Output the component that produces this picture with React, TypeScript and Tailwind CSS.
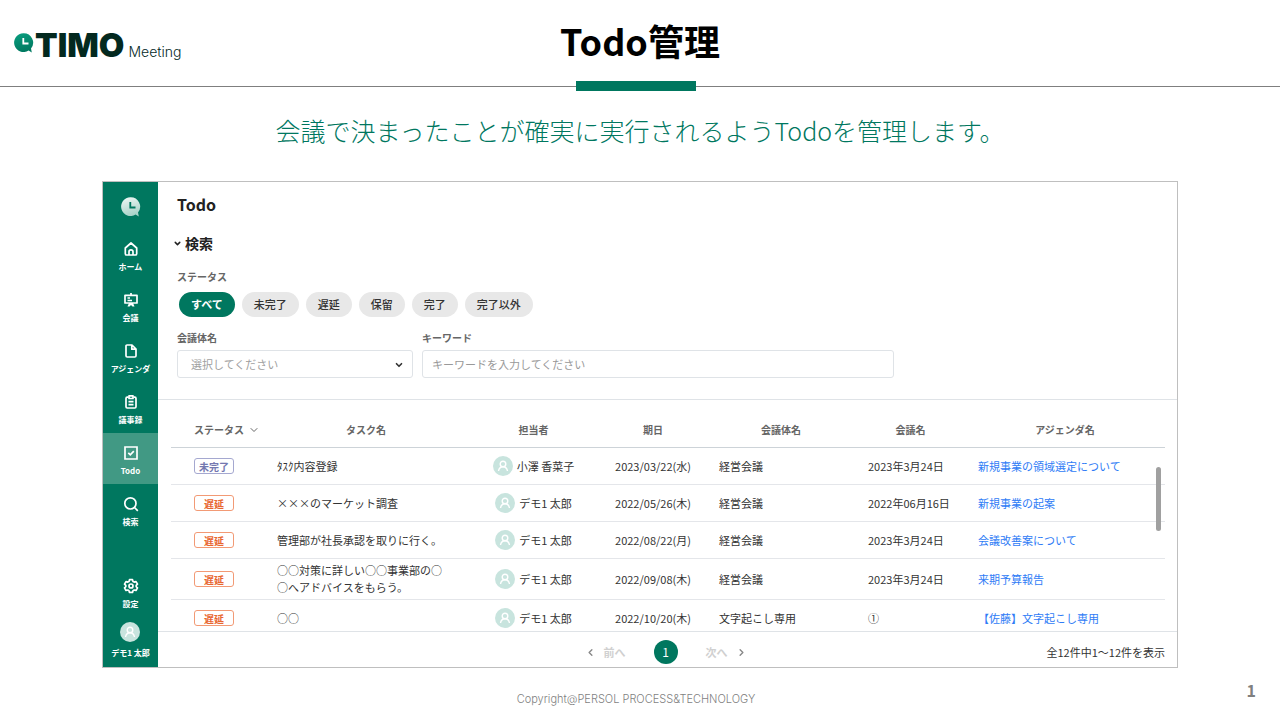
import React, { useState } from 'react';
import { ChevronDown, ChevronLeft, ChevronRight } from 'lucide-react';

interface Task {
  id: number;
  status: '未完了' | '遅延';
  name: string;
  assignee: string;
  dueDate: string;
  group: string;
  meeting: string;
  agenda: string;
}

const tasks: Task[] = [
  { id: 1, status: '未完了', name: 'ﾀｽｸ内容登録', assignee: '小澤 香菜子', dueDate: '2023/03/22(水)', group: '経営会議', meeting: '2023年3月24日', agenda: '新規事業の領域選定について' },
  { id: 2, status: '遅延', name: '×××のマーケット調査', assignee: 'デモ1 太郎', dueDate: '2022/05/26(木)', group: '経営会議', meeting: '2022年06月16日', agenda: '新規事業の起案' },
  { id: 3, status: '遅延', name: '管理部が社長承認を取りに行く。', assignee: 'デモ1 太郎', dueDate: '2022/08/22(月)', group: '経営会議', meeting: '2023年3月24日', agenda: '会議改善案について' },
  { id: 4, status: '遅延', name: '○○対策に詳しい○○事業部の○○へアドバイスをもらう。', assignee: 'デモ1 太郎', dueDate: '2022/09/08(木)', group: '経営会議', meeting: '2023年3月24日', agenda: '来期予算報告' },
  { id: 5, status: '遅延', name: '○○', assignee: 'デモ1 太郎', dueDate: '2022/10/20(木)', group: '文字起こし専用', meeting: '①', agenda: '【佐藤】文字起こし専用' },
];

const filters = ['すべて', '未完了', '遅延', '保留', '完了', '完了以外'];

const iconProps = {
  viewBox: '0 0 16 16',
  fill: 'none',
  stroke: 'currentColor',
  strokeWidth: 1.7,
  className: 'w-4 h-4',
  'aria-hidden': true,
};

const HomeIcon = () => (
  <svg {...iconProps} strokeLinejoin="round">
    <path d="M2.300 7 8 2l5.700 5v5.800a1.200 1.200 0 0 1-1.200 1.200h-9a1.200 1.200 0 0 1-1.200-1.200Z" />
    <path d="M6 14v-3.200a2 2 0 0 1 4 0V14" />
  </svg>
);

const BoardIcon = () => (
  <svg {...iconProps}>
    <path d="M2 3.300h12v7.700H2ZM8 1v2M4.500 6h2.500M4.500 8.500h4.500" strokeLinejoin="round" />
    <path d="M6 11h4l1.500 3.500h-2L8 13l-1.500 1.500h-2Z" fill="currentColor" stroke="none" />
  </svg>
);

const FileIcon = () => (
  <svg {...iconProps} strokeLinejoin="round">
    <path d="M4 2h5l4 4v6.800a1.200 1.200 0 0 1-1.200 1.200H4.200A1.200 1.200 0 0 1 3 12.800V3a1 1 0 0 1 1-1ZM8.800 2.200v4h4" />
  </svg>
);

const ClipboardIcon = () => (
  <svg {...iconProps} strokeLinejoin="round">
    <path d="M5.500 3.200H4.200a1.200 1.200 0 0 0-1.200 1.200v8.400A1.200 1.200 0 0 0 4.200 14h7.600a1.200 1.200 0 0 0 1.200-1.200V4.400a1.200 1.200 0 0 0-1.200-1.200h-1.300" />
    <path d="M6 1.800h4v2.700H6ZM5.500 7.600h5M5.500 10.600h5" />
  </svg>
);

const TodoIcon = () => (
  <svg {...iconProps}>
    <path d="M2 2h12v12H2ZM5.300 7.800l2 2 3.500-3.700" />
  </svg>
);

const SearchIcon = () => (
  <svg {...iconProps}>
    <circle cx="7.400" cy="7.400" r="5.600" />
    <path d="m11.500 11.500 3.300 3.300" />
  </svg>
);

const GearIcon = () => (
  <svg {...iconProps} strokeLinejoin="round">
    <path d="M6.500 1.700h3l.5 1.700 1.200.7 1.800-.5 1.500 2.600-1.300 1.200v1.300l1.300 1.200-1.500 2.600-1.800-.5-1.200.7-.5 1.700h-3L6 12.700 4.800 12l-1.800.5L1.500 9.900l1.300-1.200V7.400L1.500 6.200 3 3.600l1.800.5L6 3.400Z" />
    <circle cx="8" cy="8" r="2" />
  </svg>
);

const Avatar = () => (
  <svg viewBox="0 0 20 20" className="w-5 h-5 shrink-0" fill="none" aria-hidden="true">
    <circle cx="10" cy="10" r="10" fill="#c8e4de" />
    <circle cx="10" cy="8" r="2.800" stroke="#fff" strokeWidth="1.400" />
    <path d="M5.500 15c.5-2.800 2.200-4.200 4.500-4.200s4 1.400 4.500 4.200" stroke="#fff" strokeWidth="1.400" />
  </svg>
);

interface ClockMarkProps {
  from: string;
  to: string;
  hands: string;
  id: string;
}

const ClockMark: React.FC<ClockMarkProps> = ({ from, to, hands, id }) => (
  <svg viewBox="0 0 20 20" className="w-5 h-5 shrink-0" aria-hidden="true">
    <defs>
      <linearGradient id={id} x1="0" y1="0" x2="0.300" y2="1">
        <stop offset="0" stopColor={from} />
        <stop offset="1" stopColor={to} />
      </linearGradient>
    </defs>
    <path d="M9.400.2a9.400 9.400 0 1 0 5.200 17.300l3.200 1.900-.8-3.900A9.400 9.400 0 0 0 9.400.2Z" fill={`url(#${id})`} />
    <path d="M9.300 5v5.500h5.200" fill="none" stroke={hands} strokeWidth="1.800" />
  </svg>
);

const navItems = [
  { label: 'ホーム', icon: HomeIcon },
  { label: '会議', icon: BoardIcon },
  { label: 'アジェンダ', icon: FileIcon },
  { label: '議事録', icon: ClipboardIcon },
  { label: 'Todo', icon: TodoIcon },
  { label: '検索', icon: SearchIcon },
];

const Sidebar: React.FC = () => (
  <nav className="w-[55px] shrink-0 bg-[#00775f] text-white text-[8px] leading-3 font-bold flex flex-col items-stretch">
    <div className="flex justify-center pt-[15px] pb-3">
      <ClockMark id="navMark" from="#f2f9f7" to="#a9d3c9" hands="#00775f" />
    </div>
    {navItems.map(({ label, icon: Icon }) => (
      <a
        key={label}
        href="#"
        className={`h-[51px] pt-3 flex flex-col items-center gap-1 whitespace-nowrap ${label === 'Todo' ? 'bg-[#419984]' : ''}`}
      >
        <Icon />
        {label}
      </a>
    ))}
    <div className="mt-auto flex flex-col items-center pb-2">
      <a href="#" className="flex flex-col items-center gap-1">
        <GearIcon />
        設定
      </a>
      <a href="#" className="mt-3 flex flex-col items-center gap-[5px] whitespace-nowrap">
        <Avatar />
        デモ1 太郎
      </a>
    </div>
  </nav>
);

const SearchPanel: React.FC = () => {
  const [filter, setFilter] = useState('すべて');

  return (
    <section className="px-[19px] pt-[10px] pb-[21px] border-b border-[#dfe3e7]">
      <h2 className="text-base leading-6 font-bold text-[#222]">Todo</h2>
      <button type="button" className="mt-[17px] -ml-1 flex items-center gap-[3px] text-sm leading-5 font-bold text-[#222]">
        <ChevronDown className="w-[9px] h-[9px]" strokeWidth={4} />
        検索
      </button>

      <p className="mt-4 text-[10px] leading-4 font-bold text-[#666]">ステータス</p>
      <div className="mt-[7px] ml-[2px] flex flex-wrap gap-[7px]">
        {filters.map((item) => (
          <button
            key={item}
            type="button"
            onClick={() => setFilter(item)}
            className={`h-[25px] px-3 pb-px rounded-full text-[11px] leading-4 ${
              filter === item ? 'bg-[#00775f] text-white font-bold' : 'bg-[#e8e8e8] text-[#333] font-medium'
            }`}
          >
            {item}
          </button>
        ))}
      </div>

      <div className="mt-[13px] flex gap-[9px]">
        <div className="w-[236px]">
          <label htmlFor="group" className="block text-[10px] leading-4 font-bold text-[#666]">会議体名</label>
          <div className="relative mt-1">
            <select
              id="group"
              className="w-full h-7 pl-[13px] pr-6 appearance-none bg-white border border-[#dfe3e7] rounded-[3px] text-[11px] text-[#a0a0a0]"
            >
              <option>選択してください</option>
            </select>
            <ChevronDown className="absolute right-[9px] top-[10px] w-[10px] h-[10px] text-[#333] pointer-events-none" strokeWidth={4} />
          </div>
        </div>
        <div className="flex-1 max-w-[472px]">
          <label htmlFor="keyword" className="block text-[10px] leading-4 font-bold text-[#666]">キーワード</label>
          <input
            id="keyword"
            type="text"
            placeholder="キーワードを入力してください"
            className="block mt-1 w-full h-7 px-[9px] bg-white border border-[#dfe3e7] rounded-[3px] text-[11px] placeholder:text-[#999]"
          />
        </div>
      </div>
    </section>
  );
};

const TaskTable: React.FC = () => (
  <div className="relative h-[231px] pl-[13px] pr-3 overflow-hidden">
    <table className="w-full table-fixed border-separate border-spacing-0 text-[11px] leading-[17px] text-[#333]">
      <colgroup>
        <col className="w-[94px]" />
        <col className="w-[202px]" />
        <col className="w-[133px]" />
        <col className="w-[106px]" />
        <col className="w-[150px]" />
        <col className="w-[109px]" />
        <col className="w-[200px]" />
      </colgroup>
      <thead>
        <tr className="text-[10px] text-[#666] [&>th]:h-12 [&>th]:pt-3 [&>th]:font-bold [&>th]:border-b [&>th]:border-[#cdd3d8]">
          <th>
            <span className="flex items-center gap-1 pl-[23px] whitespace-nowrap">
              ステータス
              <ChevronDown className="w-3 h-3" strokeWidth={2} />
            </span>
          </th>
          <th>タスク名</th>
          <th>担当者</th>
          <th>期日</th>
          <th>会議体名</th>
          <th>会議名</th>
          <th>アジェンダ名</th>
        </tr>
      </thead>
      <tbody>
        {tasks.map((task) => (
          <tr key={task.id} className="[&>td]:h-[37px] [&>td]:border-b [&>td]:border-[#e4e6ea]">
            <td className="pl-[23px]">
              <span
                className={`flex items-center justify-center w-10 h-4 border rounded-[3px] text-[10px] font-bold ${
                  task.status === '遅延' ? 'border-[#f29a75] text-[#e8662f]' : 'border-[#a5a8d0] text-[#7478b0]'
                }`}
              >
                {task.status}
              </span>
            </td>
            <td className="pl-3 pr-5 py-[3px] break-all">{task.name}</td>
            <td>
              <span className="flex items-center justify-center gap-1 whitespace-nowrap">
                <Avatar />
                {task.assignee}
              </span>
            </td>
            <td className="text-center whitespace-nowrap">{task.dueDate}</td>
            <td className="px-[13px]">{task.group}</td>
            <td className="pl-3 whitespace-nowrap">{task.meeting}</td>
            <td className="px-[13px]">
              <a href="#" className="text-[#2f7cf6]">{task.agenda}</a>
            </td>
          </tr>
        ))}
      </tbody>
    </table>
    {/* Scroll thumb */}
    <div className="absolute right-4 top-[67px] w-[5px] h-16 rounded-full bg-[#a0a0a0]"></div>
  </div>
);

const Pagination: React.FC = () => (
  <div className="pl-2 pr-3 border-t border-[#dfe3e7]">
    <div className="h-[35px] pt-[5px] grid grid-cols-[1fr_auto_1fr] items-center text-[11px] leading-4 text-[#333]">
      <span></span>
      <div className="flex items-center gap-7">
        <button type="button" className="flex items-center gap-2 font-bold text-[#d0d0d0]">
          <ChevronLeft className="w-[11px] h-[11px] text-[#888]" strokeWidth={3} />
          前へ
        </button>
        <button type="button" className="w-6 h-6 rounded-full bg-[#00775f] text-white text-xs">1</button>
        <button type="button" className="flex items-center gap-2 font-bold text-[#d0d0d0]">
          次へ
          <ChevronRight className="w-[11px] h-[11px] text-[#888]" strokeWidth={3} />
        </button>
      </div>
      <span className="text-right">全12件中1～12件を表示</span>
    </div>
  </div>
);

const App: React.FC = () => {
  return (
    <div className="min-h-screen bg-white flex flex-col font-['Noto_Sans_CJK_JP',sans-serif]">
      <header className="h-[87px] px-[14px] grid grid-cols-[1fr_auto_1fr] border-b border-[#7f7f7f]">
        <div className="flex items-start pt-[33px] font-['Inter',sans-serif] text-[#03291f]">
          <ClockMark id="logoMark" from="#0a9f80" to="#007a61" hands="#fff" />
          <span className="ml-px flex items-baseline gap-1 leading-6">
            <span className="text-[33px] leading-6 font-black">TIMO</span>
            <span className="text-[14px] leading-4 font-light">Meeting</span>
          </span>
        </div>
        <div className="flex flex-col items-center justify-between">
          <h1 className="pt-[14px] text-4xl leading-[52px] font-bold text-black">Todo管理</h1>
          <div className="w-[120px] h-[10px] -mb-[5px] mr-2 bg-[#00775f]"></div>
        </div>
      </header>

      <p className="mt-[25px] text-center text-[25px] leading-9 font-light text-[#00775f]">
        会議で決まったことが確実に実行されるようTodoを管理します。
      </p>

      <main className="mt-[33px] mx-[102px] flex border border-[#bfbfbf]">
        <Sidebar />
        <div className="flex-1 min-w-0">
          <SearchPanel />
          <TaskTable />
          <Pagination />
        </div>
      </main>

      <footer className="mt-3 px-6 grid grid-cols-[1fr_auto_1fr] text-[#7f7f7f]">
        <span></span>
        <p className="pt-[9px] pr-2 font-['Inter',sans-serif] text-[11px] leading-5 font-light">Copyright@PERSOL PROCESS&amp;TECHNOLOGY</p>
        <span className="text-right text-base leading-5 font-bold">1</span>
      </footer>
    </div>
  );
};

export default App;
